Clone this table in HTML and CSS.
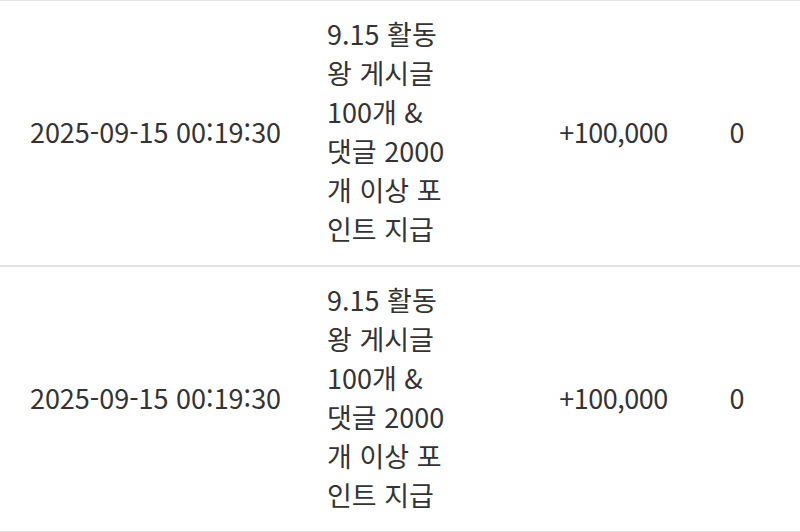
FILE: index.html
```html
<!DOCTYPE html>
<html lang="ko">
<head>
<meta charset="utf-8">
<link rel="stylesheet" href="styles.css">
</head>
<body>
<div class="list">
  <div class="row">
    <div class="cell date">2025-09-15 00:19:30</div>
    <div class="cell desc"><span>9.15 활동왕 게시글 100개 &amp; 댓글 2000개 이상 포인트 지급</span></div>
    <div class="cell amount">+100,000</div>
    <div class="cell balance">0</div>
  </div>
  <div class="row">
    <div class="cell date">2025-09-15 00:19:30</div>
    <div class="cell desc"><span>9.15 활동왕 게시글 100개 &amp; 댓글 2000개 이상 포인트 지급</span></div>
    <div class="cell amount">+100,000</div>
    <div class="cell balance">0</div>
  </div>
</div>
</body>
</html>
```
FILE: styles.css
```css
html, body {
  margin: 0;
  padding: 0;
  background: #fff;
}
body {
  font-family: "Noto Sans CJK KR", "Noto Sans", sans-serif;
  font-size: 27px;
  color: #333;
}
.list {
  border-top: 1px solid #e4e4e4;
}
.row {
  display: grid;
  grid-template-columns: 311px 242px 121px 126px;
  align-items: center;
  border-bottom: 2px solid #e2e2e2;
}
.cell {
  padding: 13px 0 17px;
  line-height: 39px;
  text-align: center;
}
.amount {
  letter-spacing: -0.5px;
}
.desc {
  text-align: left;
  padding-left: 16px;
}
.desc span {
  display: block;
  width: 125px;
}
```
